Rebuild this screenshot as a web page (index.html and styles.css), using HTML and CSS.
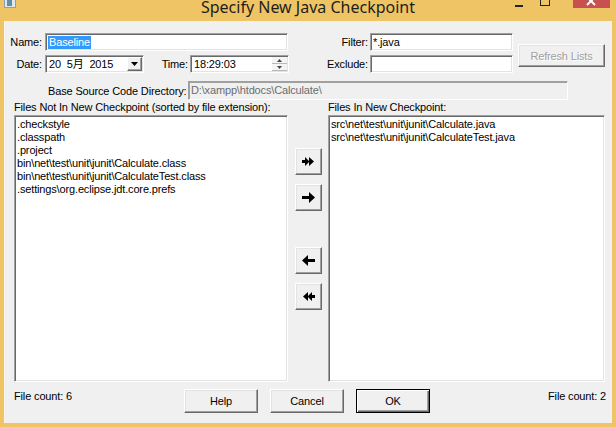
FILE: index.html
```html
<!DOCTYPE html>
<html>
<head>
<meta charset="utf-8">
<link rel="stylesheet" href="styles.css">
</head>
<body>
<div class="window">
  <div class="titlebar">
    <svg class="appicon" width="12" height="9" viewBox="0 0 12 9"><rect x="0.5" y="0" width="11" height="8.5" fill="#dfe8ee" stroke="#8aa0b0"/><rect x="3" y="1" width="5" height="6" fill="#5f8fa8"/></svg>
    <div class="title">Specify New Java Checkpoint</div>
    <div class="capbtns">
      <div class="cap cap-min"><span class="min-bar"></span></div>
      <div class="cap cap-max"><span class="max-box"></span></div>
      <div class="cap cap-close"><svg width="12" height="8" viewBox="0 0 12 8"><path d="M1 -3L9 5M9 -3L1 5" stroke="#fff" stroke-width="2"/></svg></div>
    </div>
  </div>
  <div class="client">
    <div class="top">
      <div class="fields-left">
        <div class="row">
          <span class="lbl lbl-left">Name:</span>
          <div class="edit name-edit"><span class="sel">Baseline</span></div>
        </div>
        <div class="row">
          <span class="lbl lbl-left">Date:</span>
          <div class="edit date-edit">
            <span class="date-text">20&nbsp;&nbsp;5月&nbsp;&nbsp;2015</span>
            <div class="dd-btn"><svg width="7" height="4" viewBox="0 0 7 4"><path d="M0 0h7L3.5 4z" fill="#000"/></svg></div>
          </div>
          <span class="lbl lbl-time">Time:</span>
          <div class="edit time-edit">
            <span class="time-text">18:29:03</span>
            <div class="spin">
              <div class="spin-btn"><svg width="5" height="3" viewBox="0 0 5 3"><path d="M0 3h5L2.5 0z" fill="#444"/></svg></div>
              <div class="spin-btn"><svg width="5" height="3" viewBox="0 0 5 3"><path d="M0 0h5L2.5 3z" fill="#444"/></svg></div>
            </div>
          </div>
        </div>
      </div>
      <div class="fields-right">
        <div class="row">
          <span class="lbl lbl-right">Filter:</span>
          <div class="edit filter-edit">*.java</div>
        </div>
        <div class="row">
          <span class="lbl lbl-right">Exclude:</span>
          <div class="edit filter-edit"></div>
        </div>
      </div>
      <div class="btn refresh">Refresh Lists</div>
    </div>
    <div class="base-row">
      <span class="lbl base-lbl">Base Source Code Directory:</span>
      <div class="edit base-edit">D:\xampp\htdocs\Calculate\</div>
    </div>
    <div class="lists">
      <div class="list-col list-left">
        <div class="list-lbl">Files Not In New Checkpoint (sorted by file extension):</div>
        <div class="listbox">
          <div class="item">.checkstyle</div>
          <div class="item">.classpath</div>
          <div class="item">.project</div>
          <div class="item">bin\net\test\unit\junit\Calculate.class</div>
          <div class="item">bin\net\test\unit\junit\CalculateTest.class</div>
          <div class="item">.settings\org.eclipse.jdt.core.prefs</div>
        </div>
      </div>
      <div class="mid">
        <div class="btn arrow"><svg width="13" height="9" viewBox="0 0 13 9"><path d="M0 3h3V0l4.5 4.5L3 9V6H0z M7 0l5 4.5L7 9z" fill="#000"/></svg></div>
        <div class="btn arrow"><svg width="13" height="11" viewBox="0 0 13 11"><path d="M0 4h7V0l6 5.5L7 11V7H0z" fill="#000"/></svg></div>
        <div class="btn arrow arrow-gap"><svg width="13" height="11" viewBox="0 0 13 11"><path d="M13 4H6V0L0 5.5 6 11V7h7z" fill="#000"/></svg></div>
        <div class="btn arrow"><svg width="13" height="9" viewBox="0 0 13 9"><path d="M13 3h-3V0L5.5 4.5 10 9V6h3z M6 0L1 4.5 6 9z" fill="#000"/></svg></div>
      </div>
      <div class="list-col list-right">
        <div class="list-lbl">Files In New Checkpoint:</div>
        <div class="listbox">
          <div class="item">src\net\test\unit\junit\Calculate.java</div>
          <div class="item">src\net\test\unit\junit\CalculateTest.java</div>
        </div>
      </div>
    </div>
    <div class="bottom">
      <div class="count">File count: 6</div>
      <div class="bbtns">
        <div class="btn pbtn">Help</div>
        <div class="btn pbtn">Cancel</div>
        <div class="btn pbtn default">OK</div>
      </div>
      <div class="count count-right">File count: 2</div>
    </div>
  </div>
</div>
</body>
</html>
```
FILE: styles.css
```css
html, body {
  margin: 0;
  padding: 0;
  background: #efc464;
}
.window {
  width: 616px;
  height: 427px;
  background: #efc464;
  overflow: hidden;
  font-family: "Liberation Sans", "Noto Sans CJK SC", sans-serif;
  font-size: 11px;
  letter-spacing: -0.15px;
  color: #000;
}
.titlebar {
  height: 21px;
  display: flex;
  align-items: flex-start;
}
.appicon {
  display: block;
  margin-left: 4px;
  margin-top: -1px;
  flex: none;
}
.title {
  flex: 1;
  text-align: center;
  font-family: "Noto Sans", sans-serif;
  font-size: 16px;
  letter-spacing: 0;
  line-height: 16px;
  margin-top: -1px;
  color: #1e1e1e;
  padding-left: 94px;
  white-space: nowrap;
}
.capbtns {
  display: flex;
  align-items: flex-start;
  margin-right: 6px;
  flex: none;
}
.cap {
  height: 8px;
  display: flex;
  align-items: center;
  justify-content: center;
}
.cap-min {
  width: 26px;
}
.min-bar {
  display: block;
  width: 8px;
  height: 2px;
  background: #222;
  margin-top: 4px;
}
.cap-max {
  width: 26px;
  margin-right: 15px;
}
.max-box {
  display: block;
  width: 8px;
  height: 5px;
  border: 1px solid #222;
  border-top: none;
  margin-top: -3px;
}
.cap-close {
  width: 37px;
  background: #c75050;
}
.cap-close svg {
  display: block;
}
.client {
  margin-left: 4px;
  width: 608px;
  height: 402px;
  background: #f0f0f0;
  border-top: 1px solid #f5f0e4;
  box-sizing: border-box;
  border-left: 1px solid #fbf7ee;
}
.top {
  display: flex;
  align-items: flex-start;
  padding-top: 11px;
}
.row {
  display: flex;
  align-items: center;
  height: 18px;
  margin-bottom: 4px;
}
.lbl {
  white-space: nowrap;
  flex: none;
}
.lbl-left {
  width: 40px;
  text-align: right;
  padding-right: 3px;
  box-sizing: border-box;
}
.edit {
  flex: none;
  box-sizing: border-box;
  height: 18px;
  background: #fff;
  border: 1px solid;
  border-color: #a0a0a0 #fff #fff #a0a0a0;
  box-shadow: inset 1px 1px 0 #696969, inset -1px -1px 0 #e3e3e3;
  padding: 0 3px;
  display: flex;
  align-items: center;
  white-space: nowrap;
  line-height: 13px;
}
.name-edit {
  width: 243px;
  padding-left: 2px;
}
.sel {
  background: #3399ff;
  color: #fff;
  padding: 0 1px;
}
.date-edit {
  width: 99px;
  padding-right: 1px;
  justify-content: space-between;
}
.dd-btn {
  width: 15px;
  height: 14px;
  box-sizing: border-box;
  background: #f0f0f0;
  border: 1px solid;
  border-color: #fff #696969 #696969 #fff;
  box-shadow: inset -1px -1px 0 #a0a0a0;
  display: flex;
  align-items: center;
  justify-content: center;
}
.dd-btn svg { display: block; }
.lbl-time {
  width: 46px;
  text-align: right;
  padding-right: 2px;
  box-sizing: border-box;
}
.time-edit {
  width: 99px;
  padding-right: 1px;
  justify-content: space-between;
}
.spin {
  display: flex;
  flex-direction: column;
  width: 15px;
  height: 14px;
}
.spin-btn {
  height: 7px;
  box-sizing: border-box;
  background: #f4f4f4;
  border-bottom: 1px solid #b8b8b8;
  display: flex;
  align-items: center;
  justify-content: center;
}
.spin-btn svg { display: block; }
.fields-right {
  margin-left: 34px;
}
.lbl-right {
  width: 47px;
  text-align: right;
  padding-right: 2px;
  box-sizing: border-box;
}
.filter-edit {
  width: 143px;
  padding-left: 2px;
}
.btn {
  box-sizing: border-box;
  background: #f0f0f0;
  border: 1px solid;
  border-color: #fff #696969 #696969 #fff;
  box-shadow: inset -1px -1px 0 #a0a0a0, inset 1px 1px 0 #e3e3e3;
  display: flex;
  align-items: center;
  justify-content: center;
  white-space: nowrap;
  flex: none;
}
.refresh {
  width: 87px;
  height: 23px;
  margin-left: 5px;
  margin-top: 11px;
  color: #a0a0a0;
  text-shadow: 1px 1px 0 #fff;
}
.base-row {
  display: flex;
  align-items: center;
  margin-top: 4px;
  padding-left: 43px;
  height: 19px;
}
.base-lbl {
  width: 140px;
}
.base-edit {
  width: 380px;
  height: 19px;
  background: #f0f0f0;
  color: #6d6d6d;
  box-shadow: inset 1px 1px 0 #a0a0a0, inset -1px -1px 0 #f0f0f0;
  border-color: #a0a0a0 #fff #fff #a0a0a0;
  padding-left: 2px;
}
.lists {
  display: flex;
  align-items: flex-start;
  padding-left: 9px;
  margin-top: 1px;
}
.list-lbl {
  height: 13px;
  line-height: 13px;
  margin-bottom: 1px;
  white-space: nowrap;
}
.listbox {
  box-sizing: border-box;
  height: 267px;
  background: #fff;
  border: 1px solid;
  border-color: #a0a0a0 #fff #fff #a0a0a0;
  box-shadow: inset 1px 1px 0 #696969, inset -1px -1px 0 #e3e3e3;
  padding: 2px 2px;
}
.item {
  height: 13px;
  line-height: 13px;
  white-space: nowrap;
}
.list-left .listbox {
  width: 274px;
}
.list-right .listbox {
  width: 277px;
}
.mid {
  width: 40px;
  display: flex;
  flex-direction: column;
  align-items: center;
  padding-top: 47px;
}
.arrow {
  width: 27px;
  height: 27px;
  margin-bottom: 9px;
}
.arrow svg { display: block; }
.arrow-gap {
  margin-top: 27px;
}
.bottom {
  display: flex;
  align-items: flex-start;
  padding: 7px 6px 0 9px;
}
.count {
  width: 170px;
  line-height: 13px;
  padding-top: 1px;
}
.count-right {
  text-align: right;
  margin-left: auto;
}
.bbtns {
  display: flex;
  gap: 12px;
}
.pbtn {
  width: 74px;
  height: 24px;
}
.pbtn.default {
  border-color: #000;
  box-shadow: inset 1px 1px 0 #fff, inset -1px -1px 0 #696969, inset -2px -2px 0 #a0a0a0;
}
```
